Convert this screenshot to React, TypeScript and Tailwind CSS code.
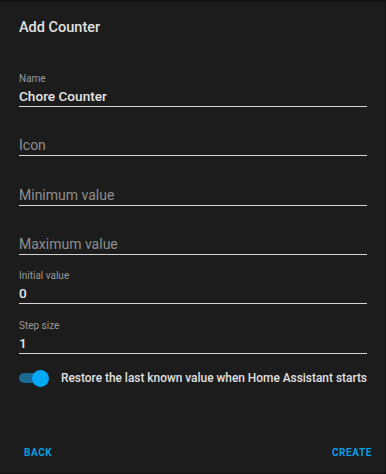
import React from "react";

function Field({ h, label, value, placeholder }: { h: string; label?: string; value?: string; placeholder?: string }) {
  return (
    <div className={`flex flex-col justify-end ${h}`}>
      {label ? (
        <>
          <div className="text-[10px] leading-[12px] text-[#9a9a9a]">{label}</div>
          <div className="mt-[1px] text-[13.6px] leading-[20px] text-[#e6e6e6] font-medium">{value}</div>
        </>
      ) : (
        <div className="text-[14px] leading-[20px] text-[#8f8f8f]">{placeholder}</div>
      )}
      <div className="h-px bg-[#d4d4d4]" />
    </div>
  );
}

export default function App() {
  return (
    <div
      className="w-[386px] h-[474px] bg-[#1c1c1c] border-t-2 border-r border-b border-[#121212] flex flex-col"
      style={{ fontFamily: "Roboto, 'Noto Sans', sans-serif" }}
    >
      <div className="pl-[19px] pt-[16px] text-[14.5px] leading-[20px] font-medium text-[#e1e1e1]">Add Counter</div>
      <div className="mt-[19px] pl-[19px] pr-[18px] flex flex-col">
        <Field h="h-[50px]" label="Name" value="Chore Counter" />
        <Field h="h-[49px]" placeholder="Icon" />
        <Field h="h-[50px]" placeholder="Minimum value" />
        <Field h="h-[49px]" placeholder="Maximum value" />
        <Field h="h-[49px]" label="Initial value" value="0" />
        <Field h="h-[50px]" label="Step size" value="1" />
      </div>
      <div className="mt-[14px] pl-[19px] flex items-center h-[20px]">
        <div className="relative w-[30px] h-[17px] flex items-center">
          <div className="w-[27px] h-[10px] rounded-full bg-[#1a6a92]" />
          <div className="absolute right-0 top-0 w-[17px] h-[17px] rounded-full bg-[#03a9f4]" />
        </div>
        <div className="ml-[12px] text-[11.9px] leading-[16px] font-medium text-[#e1e1e1]">
          Restore the last known value when Home Assistant starts
        </div>
      </div>
      <div className="mt-auto flex justify-between pl-[24px] pr-[13px] pb-[12px]">
        <span className="text-[10px] leading-[16px] font-bold tracking-[0.6px] text-[#03a0e4]">BACK</span>
        <span className="text-[10px] leading-[16px] font-bold tracking-[0.6px] text-[#03a0e4]">CREATE</span>
      </div>
    </div>
  );
}
